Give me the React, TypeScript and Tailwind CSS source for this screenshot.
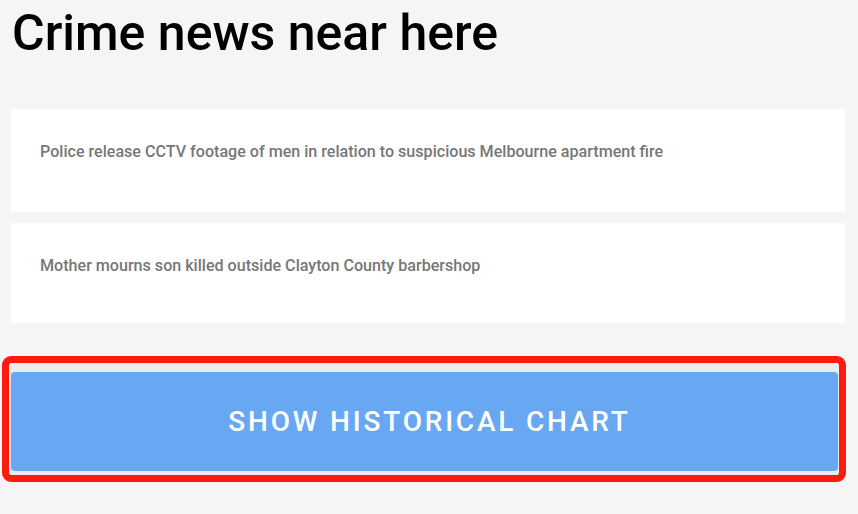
import React from "react";

export default function App() {
  const news = [
    "Police release CCTV footage of men in relation to suspicious Melbourne apartment fire",
    "Mother mourns son killed outside Clayton County barbershop",
  ];
  return (
    <div
      className="w-[858px] h-[514px] overflow-hidden bg-[#f5f5f5]"
      style={{ fontFamily: "Roboto, 'Noto Sans', sans-serif" }}
    >
      <h1 className="pt-[7px] pl-[12px] text-[50px] leading-[53px] font-medium text-black">
        Crime news near here
      </h1>
      <div className="mt-[49px] pl-[11px] pr-[13px] flex flex-col gap-[11px]">
        <div className="h-[103px] bg-white pl-[29px] pt-[33px]">
          <p className="text-[16.1px] leading-[20px] font-medium text-[#777777]">{news[0]}</p>
        </div>
        <div className="h-[100px] bg-white pl-[29px] pt-[33px]">
          <p className="text-[16.1px] leading-[20px] font-medium text-[#777777]">{news[1]}</p>
        </div>
      </div>
      <div className="mt-[33px] ml-[2px] w-[844px] h-[126px] rounded-[9px] border-[7px] border-[#ff1a10] bg-[#ebebeb] pt-[9px] pl-[2px] pr-[1px] pb-[4px]">
        <button className="w-full h-full rounded-[4px] bg-[#68a7f2] text-white text-[28px] font-medium tracking-[0.1em] uppercase flex items-center justify-center pl-[10px]">
          Show Historical Chart
        </button>
      </div>
    </div>
  );
}
